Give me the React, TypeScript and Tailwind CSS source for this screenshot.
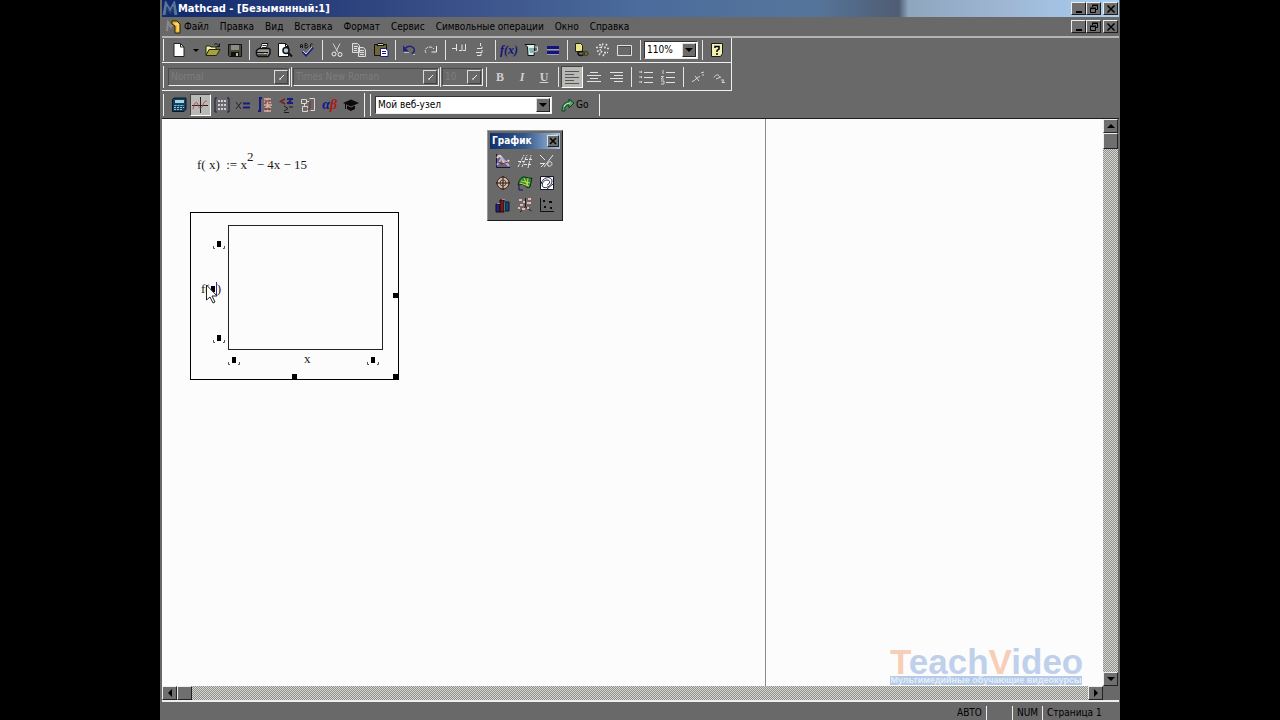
import React from 'react';

type IconProps = { children: React.ReactNode };

const Icon: React.FC<IconProps> = ({ children }) => (
  <svg className="w-4 h-4 shrink-0" viewBox="0 0 16 16" fill="none" aria-hidden="true">
    {children}
  </svg>
);

type Tool = { label: string; icon: React.ReactNode; pressed?: boolean };

const fileTools: Tool[] = [
  {
    label: 'Открыть',
    icon: (
      <Icon>
        <path d="M1 13V4h4l1 1h5v3" fill="#f1eda0" stroke="#26260c" />
        <path d="M1 13.500 4 7.500h11l-3.500 6z" fill="#a5a13c" stroke="#26260c" />
        <path d="M9 2.500c2-1.500 4-.5 5 1.500M14.500 1.500V4.500h-3" stroke="#111" />
      </Icon>
    ),
  },
  {
    label: 'Сохранить',
    icon: (
      <Icon>
        <path d="M1.500 2.500h13v12h-12l-1-1z" fill="#4a4a34" stroke="#111" />
        <path d="M4 3h8v5H4z" fill="#8c8c8c" />
        <path d="M4 10h8v4H4z" fill="#111" />
        <path d="M9 11h2v3H9z" fill="#bbb" />
      </Icon>
    ),
  },
];

const printTools: Tool[] = [
  {
    label: 'Печать',
    icon: (
      <Icon>
        <path d="M5 7 7 1.500h6L11 7z" fill="#fff" stroke="#111" />
        <path d="M7.500 3.500h4M7 5.500h4" stroke="#333" />
        <path d="M1.500 8.500 4 6.500h10l1 1v4l-2 3H3l-1.500-2z" fill="#999" stroke="#111" strokeWidth="1.500" />
        <path d="M2 10.500h11M3 13h9" stroke="#111" />
        <path d="M9 11.500h2" stroke="#e6e04a" />
      </Icon>
    ),
  },
  {
    label: 'Предварительный просмотр',
    icon: (
      <Icon>
        <path d="M1.500 1.500h7l3 3v10h-10z" fill="#fff" stroke="#111" />
        <path d="M8.500 1.500v3h3" stroke="#111" />
        <circle cx="9" cy="8.500" r="3" fill="#b8c8d0" stroke="#111" strokeWidth="1.500" />
        <path d="m11 10.500 4 4" stroke="#111" strokeWidth="2" />
      </Icon>
    ),
  },
  {
    label: 'Проверка орфографии',
    icon: (
      <Icon>
        <path
          d="M1.500 6V3l1-1 1 1v3M1.500 4.500h2M6 6V1.500h1.500l1 1-1 1H6h2l1 1-1 1.500H6M14 2.500l-1-1-1.500 1v2.500l1.500 1 1-1"
          stroke="#1a1a1a"
        />
        <path d="m3.500 9.500 3.500 4 7-8" stroke="#1f1f78" strokeWidth="2" />
        <path d="m4 9 3 3 6-7" stroke="#d4d4ee" />
      </Icon>
    ),
  },
];

const clipboardTools: Tool[] = [
  {
    label: 'Вырезать',
    icon: (
      <Icon>
        <path d="m4 1.500 5 9M11 1.500l-4 8" stroke="#d0d0d0" />
        <circle cx="5" cy="12" r="2" stroke="#eee" />
        <circle cx="11" cy="12.500" r="2" stroke="#eee" />
      </Icon>
    ),
  },
  {
    label: 'Копировать',
    icon: (
      <Icon>
        <path d="M1.500 1.500h5l2 2v7h-7zM7.500 5.500h5l2 2v7h-7z" fill="#777" stroke="#ddd" />
        <path d="M3 4.500h4M3 6.500h3M3 8.500h3M9 8.500h4M9 10.500h4M9 12.500h4" stroke="#ddd" />
      </Icon>
    ),
  },
  {
    label: 'Вставить',
    icon: (
      <Icon>
        <path d="M1.500 2.500h12v11h-12z" fill="#6e6838" stroke="#111" />
        <path d="M4 3.500h7l-1-2H5z" fill="#ccc" stroke="#111" />
        <path d="M7.500 6.500h5l2.500 2v6H7.500z" fill="#fff" stroke="#1c1c78" />
        <path d="M9 9.500h4M9 11.500h4" stroke="#1c1c78" />
      </Icon>
    ),
  },
];

const historyTools: Tool[] = [
  {
    label: 'Отменить',
    icon: (
      <Icon>
        <path d="M4 6.500c3-3 7-3 9 0 1 2 0 4-2 5" stroke="#23237e" strokeWidth="1.500" />
        <path d="M2 3.500v6h6z" fill="#23237e" />
        <path d="M3 10.500h5M12 12.500h2" stroke="#bbb" />
      </Icon>
    ),
  },
  {
    label: 'Вернуть',
    icon: (
      <Icon>
        <path d="M3 11c-2-3 0-6 4-6 2 0 3 1 4 2" stroke="#ddd" strokeDasharray="3 1" />
        <path d="M13.500 4v6h-5" stroke="#eee" />
      </Icon>
    ),
  },
];

const alignRegionTools: Tool[] = [
  {
    label: 'Выровнять по горизонтали',
    icon: (
      <Icon>
        <path d="M1 6.500h4M5.500 2v7M8 8.500h3v-6M12 8.500h2.500V2" stroke="#e4e4e4" />
      </Icon>
    ),
  },
  {
    label: 'Выровнять по вертикали',
    icon: (
      <Icon>
        <path d="M7.500 1v3M4 6.500h5v-2M3 10.500h6V8M4 13.500h4v-2" stroke="#e4e4e4" />
      </Icon>
    ),
  },
];

const insertTools: Tool[] = [
  {
    label: 'Вставить функцию',
    icon: (
      <span className="font-[Liberation_Serif,serif] text-xs leading-4 font-bold italic text-[#12127a]">
        f(x)
      </span>
    ),
  },
  {
    label: 'Вставить единицы',
    icon: (
      <Icon>
        <path d="M2 2.500h10l-1 11H5L4.500 5z" fill="#d9efef" stroke="#111" />
        <path d="M12 5h2.500v4L11 10" stroke="#ddd" />
        <path d="M6 6h5v5H7z" fill="#7fb4b8" />
      </Icon>
    ),
  },
  {
    label: 'Вычислить',
    icon: (
      <Icon>
        <path d="M2 4h12v3H2zM2 9h12v3H2z" fill="#14147e" />
        <path d="M2 7.500h12M2 12.500h12" stroke="#9a9ac0" />
      </Icon>
    ),
  },
];

const linkTools: Tool[] = [
  {
    label: 'Гиперссылка',
    icon: (
      <Icon>
        <path d="M2.500 1.500h5l2 2v6h-7z" fill="#e8e48c" stroke="#25250c" />
        <ellipse cx="8" cy="11.500" rx="3" ry="2" stroke="#111" strokeWidth="1.500" />
        <ellipse cx="12.500" cy="11.500" rx="2.500" ry="2" stroke="#4c4a1a" strokeWidth="1.500" />
      </Icon>
    ),
  },
  {
    label: 'Компонент',
    icon: (
      <Icon>
        <path
          d="M1 5.500h3M5 2v4M8 1.500l-2 5M12 2l-3 5M2 9.500l4-2M4 13l3-4M9 10.500h4M8 14l2-3M12 6.500h3"
          stroke="#ddd"
          strokeWidth="1.500"
          strokeDasharray="2 1"
        />
      </Icon>
    ),
  },
  {
    label: 'Область',
    icon: (
      <Icon>
        <path d="M.5 3.500h14v10H.5z" stroke="#e0e0e0" />
        <path d="M1.500 4.500h12v8" stroke="#4c4c4c" />
      </Icon>
    ),
  },
];

const embossed = 'font-[Liberation_Serif,serif] font-bold text-xs leading-4 text-[#d0d0d0]';

const styleTools: Tool[] = [
  { label: 'Полужирный', icon: <span className={embossed}>B</span> },
  { label: 'Курсив', icon: <span className={`${embossed} italic`}>I</span> },
  { label: 'Подчеркнутый', icon: <span className={`${embossed} underline`}>U</span> },
];

const paragraphTools: Tool[] = [
  {
    label: 'По левому краю',
    pressed: true,
    icon: (
      <Icon>
        <path d="M1 2.500h14M1 5.500h9M1 8.500h14M1 11.500h9M1 14.500h14" stroke="#555" />
      </Icon>
    ),
  },
  {
    label: 'По центру',
    icon: (
      <Icon>
        <path d="M4 3.500h8M1 6.500h14M4 9.500h8M1 12.500h14" stroke="#e2e2e2" />
      </Icon>
    ),
  },
  {
    label: 'По правому краю',
    icon: (
      <Icon>
        <path d="M2 3.500h13M6 6.500h9M2 9.500h13M6 12.500h9" stroke="#e2e2e2" />
      </Icon>
    ),
  },
];

const listTools: Tool[] = [
  {
    label: 'Маркеры',
    icon: (
      <Icon>
        <path d="M6 3.500h9M6 8.500h9M6 13.500h9" stroke="#e2e2e2" />
        <path d="M1 3h3M1 8h3M1 13h3M3.500 2v2M3.500 7v2M3.500 12v2" stroke="#d2d2d2" />
      </Icon>
    ),
  },
  {
    label: 'Нумерация',
    icon: (
      <Icon>
        <path d="M6 3.500h9M6 8.500h9M6 13.500h9" stroke="#e2e2e2" />
        <path d="M3 1v4M1 7.500h2.500L1 10h3M1 12h3v3H1" stroke="#d2d2d2" />
      </Icon>
    ),
  },
];

const indexTools: Tool[] = [
  {
    label: 'Верхний индекс',
    icon: (
      <Icon>
        <path d="M2 12.500c3 0 5-5 8-5M5 7l4 5M11 4l3-1M12 6h2" stroke="#d4d4d4" />
      </Icon>
    ),
  },
  {
    label: 'Нижний индекс',
    icon: (
      <Icon>
        <path d="M2 8.500c2-4 5-3 6 0M4 10l5-2M9 11h3l-2 2.500h3" stroke="#d4d4d4" />
      </Icon>
    ),
  },
];

const mathTools: Tool[] = [
  {
    label: 'Калькулятор',
    icon: (
      <Icon>
        <path d="M1.500 2.500 3 1h12v11l-2 2.500H1.500z" fill="#16405e" stroke="#0a1626" />
        <path d="M4 3h9v3H4z" fill="#9fd6e6" />
        <path d="M3.500 8.500H13M3 10.500h10M3 12.500h9" stroke="#8cc8dc" strokeDasharray="2 1" />
      </Icon>
    ),
  },
  {
    label: 'График',
    pressed: true,
    icon: (
      <Icon>
        <path d="M8.500 0v16M0 8.500h16" stroke="#222" />
        <path d="M1 12c2-8 4-8 5-4s4 4 5 0 3-4 4-4" stroke="#b04a4a" />
      </Icon>
    ),
  },
  {
    label: 'Матрица',
    icon: (
      <Icon>
        <path d="M3 1H1v14h2M13 1h2v14h-2" stroke="#1b1b40" />
        <path
          d="M4 4h2M7 4h2M10 4h2M4 8h2M7 8h2M10 8h2M4 12h2M7 12h2M10 12h2"
          stroke="#d5c8d8"
          strokeWidth="2"
        />
      </Icon>
    ),
  },
  {
    label: 'Вычисление',
    icon: (
      <Icon>
        <path d="m1 5 5 7M6.500 5 1 12" stroke="#222" />
        <path d="M8 6.500h7M8 10.500h7" stroke="#1a1a80" strokeWidth="2" />
      </Icon>
    ),
  },
  {
    label: 'Исчисление',
    icon: (
      <Icon>
        <path d="M5 1H3v13H1" stroke="#1a1a7a" strokeWidth="2" />
        <path
          d="M7 2h7M7 5l3-2 4 3M7 8h8M8 11l3-2 3 2M7 14h7M10.500 1v14"
          stroke="#e2a9a0"
          strokeWidth="1.500"
        />
        <path d="M8 4h5M8 12h5" stroke="#74201c" />
      </Icon>
    ),
  },
  {
    label: 'Булева алгебра',
    icon: (
      <Icon>
        <path d="M6 2 1.500 4.500 6 7" stroke="#7c1c1c" strokeWidth="1.500" />
        <path d="M8 2h6M8 6h6M13 1 9 7" stroke="#1a1a80" strokeWidth="2" />
        <path d="m5 9 4 2.500L5 14M10 10h4M5 15.500h5" stroke="#1b1b1b" />
      </Icon>
    ),
  },
  {
    label: 'Программирование',
    icon: (
      <Icon>
        <path
          d="M1.500 2.500h5v4h-5zM9.500 1.500h5v12h-4M2.500 9.500h5v5h-5zM4.500 6.500v3M6.500 4.500h3"
          stroke="#ded4d4"
        />
        <path d="M10 4v7M7 12h3" stroke="#7a2626" />
      </Icon>
    ),
  },
  {
    label: 'Греческие символы',
    icon: (
      <span className="font-[Liberation_Serif,serif] text-sm leading-4 font-bold italic text-[#14148a]">
        α<span className="text-[#b01818]">β</span>
      </span>
    ),
  },
  {
    label: 'Символьные операции',
    icon: (
      <Icon>
        <path d="M0 6 8 2.500 16 6 8 9.500z" fill="#0a0a0a" />
        <path d="M4 8.500V12l4 2 4-2V8.500L8 10.500z" fill="#0a0a0a" />
        <path d="M2.500 7v5" stroke="#0a0a0a" />
      </Icon>
    ),
  },
];

const graphTools: Tool[] = [
  {
    label: 'График X-Y',
    icon: (
      <Icon>
        <path d="M1.500 1v13.500H15" stroke="#15154c" />
        <path d="M2 5c3-5 5 0 6 3s4 2 6-1" stroke="#efc9c4" strokeWidth="2" />
        <path d="m2 12 5-7 7 8" stroke="#a9b0ee" strokeWidth="2" />
        <path d="m3 9 4 2 6-2" stroke="#8e2323" />
      </Icon>
    ),
  },
  {
    label: 'Масштаб графика',
    icon: (
      <Icon>
        <path
          d="M1 14 7 2M5 14l5-12M11 15l3-13M1 8.500h6M8 6.500h7M7 11.500h7"
          stroke="#e6e6e6"
          strokeDasharray="3 1"
        />
      </Icon>
    ),
  },
  {
    label: 'Трассировка',
    icon: (
      <Icon>
        <path
          d="m1 2 5 5M5 14l9-12M1 10.500h5M2 14l4-4M9 13c4 1 5-3 3-4S8 10 9 13"
          stroke="#e6e6e6"
        />
      </Icon>
    ),
  },
  {
    label: 'Полярный график',
    icon: (
      <Icon>
        <circle cx="8" cy="8" r="6" fill="#cbb6a2" stroke="#33201a" />
        <circle cx="8" cy="8" r="3" stroke="#7a4a3a" />
        <path d="M8 1v14M1 8h14" stroke="#221814" />
      </Icon>
    ),
  },
  {
    label: 'График поверхности',
    icon: (
      <Icon>
        <path
          d="M1 10c1-5 3-8 6-8 3 0 5 2 8 1l-2 9c-3 2-4-1-6-2s-4-1-6 0z"
          fill="#2f8a36"
          stroke="#0c2c10"
        />
        <path d="M4 6l9 2M7 3l4 8M11 3l-1 8M3 8l9 3" stroke="#c9d94e" />
        <path d="M2 10v5h4" stroke="#14145c" />
      </Icon>
    ),
  },
  {
    label: 'Контурный график',
    icon: (
      <Icon>
        <path d="M1.500 1.500h13v13h-13z" fill="#fff" stroke="#14142c" />
        <path d="M2 9c2-8 11-8 11-3s-7 8-9 6 0-7 4-7 3 4 0 5M8 14l6-5" stroke="#24243c" />
      </Icon>
    ),
  },
  {
    label: 'Столбиковая диаграмма',
    icon: (
      <Icon>
        <path d="M1 7h4v8H1z" fill="#24247c" stroke="#0c0c20" />
        <path d="M5 3h4v12H5z" fill="#7c1818" stroke="#200808" />
        <path d="M10 5h4v9h-4z" fill="#1f3c8a" stroke="#081c18" />
        <path d="M9.500 5v9" stroke="#1f8c5a" />
        <path d="M2 6.500h3M7 2.500h3" stroke="#8c8cd0" />
      </Icon>
    ),
  },
  {
    label: 'Точечный график',
    icon: (
      <Icon>
        <path d="M8.500 1v9l6 4M8.500 10 3 15" stroke="#2a1a1a" />
        <path
          d="M2 3h3M6 5h2M11 2h3M3 8h3M10 6h4M1 11h2M5 12h3M10 11h2"
          stroke="#ecb6b0"
          strokeWidth="2"
        />
      </Icon>
    ),
  },
  {
    label: 'Векторное поле',
    icon: (
      <Icon>
        <path d="M1.500 1v13.500H15" stroke="#101010" />
        <path d="M4 3h2v2H4zM10 4h3v2h-3zM5 9h2v2H5zM11 10h2v2h-2zM7 6l2 2" fill="#0c0c0c" />
      </Icon>
    ),
  },
];

const menu = [
  'Файл',
  'Правка',
  'Вид',
  'Вставка',
  'Формат',
  'Сервис',
  'Символьные операции',
  'Окно',
  'Справка',
];

const Separator = () => (
  <span className="w-1.5 flex justify-center">
    <span className="w-px h-5 bg-[#e4e4e4]" />
  </span>
);

const WideSeparator = () => (
  <span className="w-2 flex justify-center">
    <span className="w-px h-5 bg-[#e4e4e4]" />
  </span>
);

const Gripper = () => <span className="w-px h-[22px] ml-px mr-1 bg-[#f0f0f0]" />;

const Tools: React.FC<{ items: Tool[] }> = ({ items }) => (
  <>
    {items.map((tool) => (
      <button
        key={tool.label}
        type="button"
        aria-label={tool.label}
        aria-pressed={tool.pressed}
        className={`w-[22px] h-[22px] flex items-center justify-center ${
          tool.pressed
            ? 'bg-[#b9b9b5] border border-t-[#444] border-l-[#444] border-b-white border-r-white'
            : ''
        }`}
      >
        {tool.icon}
      </button>
    ))}
  </>
);

const DropArrow: React.FC<{ disabled?: boolean }> = ({ disabled }) => (
  <span
    className={`absolute right-px top-px bottom-px w-3.5 flex items-center justify-center border pointer-events-none ${
      disabled
        ? 'border-t-[#dcdcdc] border-l-[#dcdcdc] border-b-[#444] border-r-[#444] bg-[#696969]'
        : 'border-t-[#ddd] border-l-[#ddd] border-b-[#222] border-r-[#222] bg-[#6b6b6b]'
    }`}
  >
    <svg className="w-2 h-2" viewBox="0 0 8 8" aria-hidden="true">
      {disabled ? (
        <path d="M7 2 3 6M2 6h2" stroke="#eee" />
      ) : (
        <path d="M0 2h8L4 6z" fill="#000" />
      )}
    </svg>
  </span>
);

type ComboProps = { label: string; value: string; width: string; disabled?: boolean };

const Combo: React.FC<ComboProps> = ({ label, value, width, disabled }) => (
  <span
    className={`relative h-[18px] border ${width} ${
      disabled
        ? 'border-t-[#4a4a4a] border-l-[#4a4a4a] border-b-[#eee] border-r-[#eee]'
        : 'border-t-[#333] border-l-[#333] border-b-[#eee] border-r-[#eee] bg-white'
    }`}
  >
    <select
      aria-label={label}
      disabled={disabled}
      defaultValue={value}
      className={`block w-full h-4 pl-0.5 appearance-none text-[10px] leading-4 outline-none ${
        disabled ? 'text-[#7d7d7d]' : 'text-black'
      }`}
    >
      <option>{value}</option>
    </select>
    <DropArrow disabled={disabled} />
  </span>
);

const windowButton =
  'w-[15px] h-[13px] flex items-center justify-center bg-[#6f6f6f] border border-t-[#eee] border-l-[#eee] border-b-[#1c1c1c] border-r-[#1c1c1c]';

const WindowButtons = () => (
  <div className="flex">
    <button type="button" aria-label="Свернуть" className={windowButton}>
      <svg className="w-2.5 h-2.5" viewBox="0 0 10 10">
        <path d="M2 7h6v2H2z" fill="#000" />
      </svg>
    </button>
    <button type="button" aria-label="Восстановить" className={windowButton}>
      <svg className="w-2.5 h-2.5" viewBox="0 0 10 10" fill="none" stroke="#000">
        <path d="M3.500 3V1.500h5v4H7M3 1h6M1.500 4.500h5v4h-5zM1 4h6" />
      </svg>
    </button>
    <button type="button" aria-label="Закрыть" className={`${windowButton} ml-0.5`}>
      <svg className="w-2.5 h-2.5" viewBox="0 0 10 10">
        <path d="m1.500 1.500 7 7M8.500 1.500l-7 7" stroke="#000" strokeWidth="1.500" />
      </svg>
    </button>
  </div>
);

const scrollBox =
  'flex items-center justify-center shrink-0 bg-[#6f6f6f] border border-t-[#eee] border-l-[#eee] border-b-[#222] border-r-[#222]';
const scrollTrack =
  'bg-[#b4b4b0] bg-[repeating-conic-gradient(#8f8f8c_0%_25%,#d6d6d2_0%_50%)] bg-[length:2px_2px]';

const ScrollArrow: React.FC<{ label: string; d: string }> = ({ label, d }) => (
  <button type="button" aria-label={label} className={`${scrollBox} w-[15px] h-3.5`}>
    <svg className="w-2 h-2" viewBox="0 0 8 8">
      <path d={d} fill="#000" />
    </svg>
  </button>
);

// Empty slot of a plot axis
const Placeholder: React.FC<{ place: string }> = ({ place }) => (
  <svg className={`absolute w-3 h-2 ${place}`} viewBox="0 0 12 8" aria-hidden="true">
    <path d="M4 0h4v6H4z" fill="#000" />
    <path d="M.5 5v2.500H2M11.500 5v2.500H10" stroke="#555" fill="none" />
  </svg>
);

const Plot = () => (
  <div className="absolute left-7 top-[93px] w-[209px] h-[168px] border border-black">
    <div className="ml-[37px] mt-3 w-[155px] h-[125px] border border-[#222]" />
    <Placeholder place="left-[22px] top-7" />
    <Placeholder place="left-[22px] top-[122px]" />
    <Placeholder place="left-[37px] top-36" />
    <Placeholder place="left-44 top-36" />
    <span className="absolute left-2.5 top-[68px] flex items-center font-[Liberation_Serif,serif] text-[13px] leading-4">
      f(
      <span className="w-1 h-1.5 mx-px bg-black" />
      <span className="w-px h-3.5 bg-[#2b2bb0]" />)
    </span>
    <span className="absolute left-[113px] top-[138px] font-[Liberation_Serif,serif] text-[13px] leading-4">
      x
    </span>
    <span className="absolute right-0 top-20 w-[5px] h-[5px] bg-black" />
    <span className="absolute right-0 bottom-0 w-[5px] h-[5px] bg-black" />
    <span className="absolute left-[101px] bottom-0 w-[5px] h-[5px] bg-black" />
    <svg className="absolute left-[15px] top-[71px] w-3 h-5" viewBox="0 0 12 20" aria-hidden="true">
      <path d="M.5 1v15L4 13l3 6 2-1-3-6h5z" fill="#fff" stroke="#222" />
    </svg>
  </div>
);

const GraphPalette = () => (
  <section
    aria-label="График"
    className="absolute left-[325px] top-[11px] w-[76px] h-[91px] p-0.5 bg-[#696969] border border-t-[#999] border-l-[#999] border-b-[#1c1c1c] border-r-[#1c1c1c]"
  >
    <div className="h-4 pl-0.5 pr-px flex items-center justify-between bg-linear-to-r from-[#12306e] via-[#34588c] to-[#a8c4e2]">
      <h2 className="text-[10px] leading-4 font-bold text-white">График</h2>
      <button
        type="button"
        aria-label="Закрыть панель"
        className="w-3 h-3 flex items-center justify-center bg-[#6f6f6f] border border-t-[#ddd] border-l-[#ddd] border-b-[#222] border-r-[#222]"
      >
        <svg className="w-2 h-2" viewBox="0 0 8 8">
          <path d="m1 1 6 6M7 1 1 7" stroke="#000" strokeWidth="1.500" />
        </svg>
      </button>
    </div>
    <div className="grid grid-cols-[repeat(3,22px)] pl-0.5 pt-px">
      <Tools items={graphTools} />
    </div>
  </section>
);

const Watermark = () => (
  <div className="absolute right-[21px] bottom-px w-48 font-[Liberation_Sans,sans-serif]">
    <div className="text-[35px] leading-7 font-bold text-[#bfd1ea] text-center">
      <span className="text-[#f6cfb8]">T</span>each<span className="text-[#f6cfb8]">V</span>ideo
    </div>
    <div className="h-[9px] bg-[#b4cae8] text-[9px] leading-[9px] font-bold text-[#e4edf8] whitespace-nowrap text-center">
      Мультимедийные обучающие видеокурсы
    </div>
  </div>
);

const Worksheet = () => (
  <main className="relative flex-1 overflow-hidden bg-[#fdfcfd] text-[#1a1a1a]">
    <div className="w-[604px] h-full border-r border-[#8a8a8a]" />
    <p className="absolute left-[35px] top-9 font-[Liberation_Serif,serif] text-[13px] leading-5 whitespace-pre">
      f( x)  := x<sup className="text-[13px] leading-none -top-2">2</sup> − 4x − 15
    </p>
    <Plot />
    <GraphPalette />
    <Watermark />
  </main>
);

export default function App() {
  return (
    <div className="min-h-screen flex justify-center bg-black">
      <div className="w-3/4 min-h-screen flex flex-col pl-0.5 pr-px bg-[#696969] font-[DejaVu_Sans_Condensed,DejaVu_Sans,sans-serif] text-[10px] text-black">
        <header className="h-[17px] flex items-center justify-between pr-px bg-[linear-gradient(90deg,#10296c_0%,#3a5088_30%,#4b6c9c_50%,#56759c_68%,#4f5d72_77%,#8fa6be_78%,#9fb6d4_88%,#a8d0f4_100%)]">
          <div className="flex items-center">
            <svg className="w-4 h-4" viewBox="0 0 16 16" fill="none" aria-hidden="true">
              <path d="M2 14 4 3l4 7 4-7 2 11" stroke="#56749c" strokeWidth="3" />
              <path d="M5 14V6l3 6 3-6v8" stroke="#23375c" />
            </svg>
            <h1 className="text-[11px] leading-4 font-bold text-white">Mathcad - [Безымянный:1]</h1>
          </div>
          <WindowButtons />
        </header>

        <div className="h-[19px] flex items-center justify-between pr-px">
          <nav className="flex items-center">
            <svg className="w-4 h-4 ml-1" viewBox="0 0 16 16" fill="none" aria-hidden="true">
              <path d="M1 12 2 3l3 5 3-5" stroke="#8a8a8a" strokeWidth="2" />
              <path d="M6 2h5l3 3v9H9V7L6 5z" fill="#f4b82c" stroke="#2c2408" />
              <path d="M9 5h3v7" stroke="#fff0a0" />
            </svg>
            <ul className="flex gap-[11px] ml-0.5">
              {menu.map((item) => (
                <li key={item}>
                  <button type="button" className="block leading-4 whitespace-nowrap">
                    {item}
                  </button>
                </li>
              ))}
            </ul>
          </nav>
          <WindowButtons />
        </div>

        {/* Standard toolbar */}
        <div className="border-t-2 border-[#b4b4b4]">
          <div className="w-[570px] h-[25px] flex items-center border-r border-b border-[#f0f0f0]">
            <Gripper />
            <button
              type="button"
              aria-label="Создать"
              className="w-[22px] h-[22px] flex items-center justify-center"
            >
              <Icon>
                <path d="M3 1.500h6.500l3.500 3.500v9.500H3z" fill="#fff" stroke="#222" />
                <path d="M9.500 1.500V5H13" stroke="#222" />
              </Icon>
            </button>
            <button
              type="button"
              aria-label="Шаблоны"
              className="w-3 h-[22px] flex items-center justify-center"
            >
              <svg className="w-1.5 h-1.5" viewBox="0 0 6 6">
                <path d="M0 2h6L3 5z" fill="#000" />
              </svg>
            </button>
            <Tools items={fileTools} />
            <Separator />
            <Tools items={printTools} />
            <WideSeparator />
            <Tools items={clipboardTools} />
            <Separator />
            <Tools items={historyTools} />
            <Separator />
            <Tools items={alignRegionTools} />
            <Separator />
            <Tools items={insertTools} />
            <Separator />
            <Tools items={linkTools} />
            <WideSeparator />
            <Combo label="Масштаб" value="110%" width="w-[54px]" />
            <WideSeparator />
            <button
              type="button"
              aria-label="Справка"
              className="w-[22px] h-[22px] flex items-center justify-center"
            >
              <Icon>
                <path d="M2.500 1.500h11v10l-2 3h-9z" fill="#f4f0b4" stroke="#1c1c1c" />
                <path d="M6 6V4.500h4V7L8 8.500V10M8 11v2" stroke="#000" strokeWidth="1.500" />
              </Icon>
            </button>
          </div>
        </div>

        {/* Formatting toolbar */}
        <div className="w-[570px] h-7 flex items-center border-r border-b border-[#f0f0f0]">
          <Gripper />
          <Combo label="Стиль" value="Normal" width="w-[122px]" disabled />
          <span className="w-px h-5 mx-px bg-[#e4e4e4]" />
          <Combo label="Шрифт" value="Times New Roman" width="w-[146px]" disabled />
          <span className="w-px h-5 mx-px bg-[#e4e4e4]" />
          <Combo label="Размер" value="10" width="w-[41px]" disabled />
          <Separator />
          <Tools items={styleTools} />
          <Separator />
          <Tools items={paragraphTools} />
          <WideSeparator />
          <Tools items={listTools} />
          <WideSeparator />
          <Tools items={indexTools} />
        </div>

        {/* Math and web toolbars */}
        <div className="h-7 flex items-center border-b border-[#1c1c1c]">
          <Gripper />
          <div className="w-[194px] flex">
            <Tools items={mathTools} />
          </div>
          <span className="w-px h-6 ml-0.5 mr-1 bg-[#f0f0f0]" />
          <Gripper />
          <Combo label="Адрес" value="Мой веб-узел" width="w-[177px]" />
          <button
            type="button"
            className="h-[22px] w-12 pl-2 flex items-center border-r border-[#f0f0f0]"
          >
            <Icon>
              <path d="M2 14C2 8 5 5 9 5V2l5 4-5 5V8C6 8 4 10 5 14z" fill="#4cae62" stroke="#103c1c" />
              <path d="M4 10c1-3 3-4 6-4" stroke="#c0f0c8" />
            </Icon>
            Go
          </button>
        </div>

        <div className="flex-1 flex">
          <Worksheet />
          <div className={`w-[15px] mr-px flex flex-col ${scrollTrack}`}>
            <ScrollArrow label="Вверх" d="M0 6h8L4 2z" />
            <span className={`${scrollBox} w-[15px] h-4`} />
            <span className="flex-1" />
            <ScrollArrow label="Вниз" d="M0 2h8L4 6z" />
          </div>
        </div>

        <div className="h-4 flex items-center border-b-2 border-[#eee]">
          <div className={`flex-1 flex ${scrollTrack}`}>
            <ScrollArrow label="Влево" d="M6 0v8L2 4z" />
            <span className={`${scrollBox} w-[15px] h-3.5`} />
            <span className="flex-1" />
            <ScrollArrow label="Вправо" d="M2 0v8l4-4z" />
          </div>
          <span className="w-4" />
        </div>

        <footer className="h-[18px] pt-1 flex items-center justify-end leading-[14px]">
          <span className="px-1 border-r border-[#eee]">АВТО</span>
          <span className="w-[26px] h-3.5 border-r border-[#eee]" />
          <span className="px-1 border-r border-[#eee]">NUM</span>
          <span className="pl-1 w-[76px] whitespace-nowrap">Страница 1</span>
        </footer>
      </div>
    </div>
  );
}
